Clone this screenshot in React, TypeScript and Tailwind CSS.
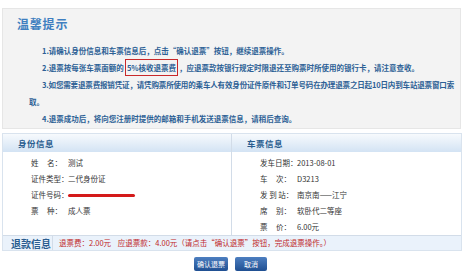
import React from "react";

const font = { fontFamily: '"Noto Sans CJK SC", "Liberation Sans", sans-serif' };

function Row({ label, value }: { label: React.ReactNode; value: React.ReactNode }) {
  return (
    <div className="flex h-4 items-center whitespace-nowrap">
      <div className="w-[37px] shrink-0">{label}</div>
      <div>{value}</div>
    </div>
  );
}

function PanelHead({ children }: { children: React.ReactNode }) {
  return (
    <div className="flex h-[18px] items-center bg-gradient-to-b from-[#f7fafd] to-[#d3e3f4] pl-[15px] text-[8.5px] font-bold tracking-[0.5px] text-[#2a5d8f]">
      {children}
    </div>
  );
}

export default function App() {
  return (
    <div className="h-[273px] w-[465px] bg-white pt-2" style={font}>
      {/* 温馨提示 */}
      <div className="mx-[2px] h-[121px] w-[459px] border border-[#e6e6e6] bg-[#f3f3f3] pl-[26px]">
        <div className="-ml-[12px] mt-[7px] text-[12px] font-bold leading-[16px] tracking-[0.8px] text-[#3f7fc0]">
          温馨提示
        </div>
        <div className="mt-[10px] text-[7.5px] font-semibold leading-[17px] text-[#2c5f95]">
          <p className="indent-[13px]">1.请确认身份信息和车票信息后，点击“确认退票”按钮，继续退票操作。</p>
          <p className="indent-[13px]">
            2.退票按每张车票面额的
            <span className="mx-[1px] border-[1.5px] border-[#c8282a] px-[1px] py-[2px]">5%核收退票费</span>
            ，应退票款按银行规定时限退还至购票时所使用的银行卡，请注意查收。
          </p>
          <p className="indent-[13px]">
            <span className="whitespace-nowrap tracking-[-0.15px]">
              3.如您需要退票费报销凭证，请凭购票所使用的乘车人有效身份证件原件和订单号码在办理退票之日起10日内到车站退票窗口索
            </span>
            <br />
            取。
          </p>
          <p className="indent-[13px]">4.退票成功后，将向您注册时提供的邮箱和手机发送退票信息，请稍后查询。</p>
        </div>
      </div>

      {/* 信息表 */}
      <div className="mx-[2px] mt-[4px] w-[460px] border border-[#d9e3ee]">
        <div className="flex">
          <div className="w-[229px] border-r border-[#d2dce8]">
            <PanelHead>身份信息</PanelHead>
            <div className="pl-[28px] pt-[3px] text-[7.5px] text-[#333]">
              <Row label={<span>姓&nbsp;&nbsp;&nbsp;&nbsp;&nbsp;名：</span>} value="测试" />
              <Row label="证件类型：" value="二代身份证" />
              <Row
                label="证件号码："
                value={<div className="h-[3px] w-[67px] rounded-full bg-[#d41a1a]" />}
              />
              <Row label={<span>票&nbsp;&nbsp;&nbsp;&nbsp;&nbsp;种：</span>} value="成人票" />
            </div>
          </div>
          <div className="flex-1">
            <PanelHead>车票信息</PanelHead>
            <div className="pl-[28px] pt-[3px] text-[7.5px] text-[#333]">
              <Row label="发车日期：" value="2013-08-01" />
              <Row label={<span>车&nbsp;&nbsp;&nbsp;&nbsp;&nbsp;次：</span>} value="D3213" />
              <Row label={<span>发&nbsp;到&nbsp;站：</span>} value="南京南——江宁" />
              <Row label={<span>席&nbsp;&nbsp;&nbsp;&nbsp;&nbsp;别：</span>} value="软卧代二等座" />
              <Row label={<span>票&nbsp;&nbsp;&nbsp;&nbsp;&nbsp;价：</span>} value="6.00元" />
            </div>
          </div>
        </div>
        <div className="flex h-[15px] items-center border-t border-[#d2dce8] bg-[#eaf2fb]">
          <div className="h-full w-[50px] border-r border-[#d2dce8] pl-[8px] text-[10px] font-bold leading-[15px] text-[#2a5d8f]">
            退款信息
          </div>
          <div className="pl-[6px] text-[7.5px] text-[#c0282a]">
            退票费：2.00元&nbsp;&nbsp;&nbsp;&nbsp;应退票款：4.00元（请点击“确认退票”按钮，完成退票操作。）
          </div>
        </div>
      </div>

      {/* 按钮 */}
      <div className="mt-[6px] flex justify-center gap-[7px] pr-[4px]">
        <button className="h-[14px] w-[34px] rounded-[2px] bg-gradient-to-b from-[#4d7fc0] to-[#1f4f92] text-[7px] leading-[14px] text-white">
          确认退票
        </button>
        <button className="h-[14px] w-[32px] rounded-[2px] bg-gradient-to-b from-[#4d7fc0] to-[#1f4f92] text-[7px] leading-[14px] text-white">
          取消
        </button>
      </div>
    </div>
  );
}
